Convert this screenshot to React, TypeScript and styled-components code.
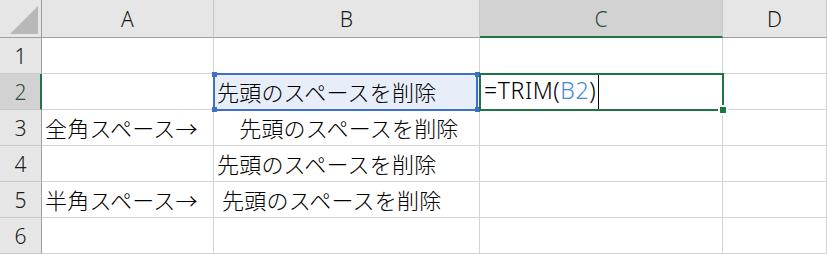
import React from "react";
import styled, { createGlobalStyle, css } from "styled-components";

const GRID = "#d4d4d4";
const HEADER_LINE = "#9f9f9f";
const GREEN = "#217346";
const BLUE = "#3d70c9";

const GlobalStyle = createGlobalStyle`
  html, body {
    margin: 0;
    padding: 0;
    background: #ffffff;
    overflow: hidden;
  }
`;

const columns = ["A", "B", "C", "D"];

type Row = { n: number; cells: string[] };

const rows: Row[] = [
  { n: 1, cells: ["", "", "", ""] },
  { n: 2, cells: ["", "先頭のスペースを削除", "", ""] },
  { n: 3, cells: ["全角スペース→", "　先頭のスペースを削除", "", ""] },
  { n: 4, cells: ["", "先頭のスペースを削除", "", ""] },
  { n: 5, cells: ["半角スペース→", " 先頭のスペースを削除", "", ""] },
  { n: 6, cells: ["", "", "", ""] },
];

const App = () => {
  return (
    <>
      <GlobalStyle />
      <Sheet>
        <Corner>
          <svg width="42" height="38" viewBox="0 0 42 38">
            <polygon points="10,34 38,34 38,6" fill="#b8b8b8" />
          </svg>
        </Corner>
        {columns.map((c) => (
          <ColHeader key={c} $selected={c === "C"}>
            {c}
          </ColHeader>
        ))}
        {rows.map((row) => (
          <React.Fragment key={row.n}>
            <RowHeader $selected={row.n === 2}>{row.n}</RowHeader>
            {row.cells.map((text, i) => {
              const ref = `${columns[i]}${row.n}`;
              if (ref === "B2") {
                return (
                  <Cell key={ref} $highlight>
                    <CellText>{text}</CellText>
                    <RangeBox>
                      <Handle $x="left" $y="top" />
                      <Handle $x="right" $y="top" />
                      <Handle $x="left" $y="bottom" />
                      <Handle $x="right" $y="bottom" />
                    </RangeBox>
                  </Cell>
                );
              }
              if (ref === "C2") {
                return (
                  <Cell key={ref}>
                    <Formula>
                      =TRIM(<RefText>B2</RefText>)
                    </Formula>
                    <Caret />
                    <ActiveBox>
                      <FillHandle />
                    </ActiveBox>
                  </Cell>
                );
              }
              return (
                <Cell key={ref}>
                  <CellText>{text}</CellText>
                </Cell>
              );
            })}
          </React.Fragment>
        ))}
      </Sheet>
    </>
  );
};

export default App;

const Sheet = styled.div`
  display: grid;
  grid-template-columns: 42px 172px 266px 243px 104px;
  grid-template-rows: 38px repeat(6, 36px);
  background: #ffffff;
  font-family: "Noto Sans", "Noto Sans CJK JP", sans-serif;
  color: #000000;
`;

const Corner = styled.div`
  background: #e6e6e6;
  border-right: 1px solid ${HEADER_LINE};
  border-bottom: 1px solid ${HEADER_LINE};
  box-sizing: border-box;
  overflow: hidden;

  svg {
    display: block;
  }
`;

const ColHeader = styled.div<{ $selected?: boolean }>`
  box-sizing: border-box;
  display: flex;
  align-items: center;
  justify-content: center;
  font-size: 21px;
  font-weight: 300;
  padding-top: 1px;
  background: #e6e6e6;
  border-right: 1px solid #c8c8c8;
  border-bottom: 1px solid ${HEADER_LINE};
  color: #1a1a1a;

  ${(p) =>
    p.$selected &&
    css`
      background: #d2d2d2;
      border-bottom: 2px solid ${GREEN};
      color: #28513a;
    `}
`;

const RowHeader = styled.div<{ $selected?: boolean }>`
  box-sizing: border-box;
  display: flex;
  align-items: center;
  justify-content: center;
  font-size: 21px;
  font-weight: 300;
  background: #e6e6e6;
  border-right: 1px solid ${HEADER_LINE};
  border-bottom: 1px solid #c8c8c8;
  color: #1a1a1a;

  ${(p) =>
    p.$selected &&
    css`
      background: #d2d2d2;
      border-right: 2px solid ${GREEN};
      padding-left: 1px;
      color: #28513a;
    `}
`;

const Cell = styled.div<{ $highlight?: boolean }>`
  position: relative;
  box-sizing: border-box;
  display: flex;
  align-items: center;
  padding-left: 3px;
  border-right: 1px solid ${GRID};
  border-bottom: 1px solid ${GRID};
  background: ${(p) => (p.$highlight ? "#e8eef9" : "#ffffff")};
`;

const CellText = styled.span`
  font-family: "Noto Sans CJK JP", sans-serif;
  font-size: 22px;
  font-weight: 300;
  letter-spacing: 0.2px;
  line-height: 1;
  white-space: pre;
  margin-top: -2px;
`;

const Formula = styled.span`
  font-family: "Noto Sans", "Noto Sans CJK JP", sans-serif;
  font-size: 23px;
  font-weight: 300;
  letter-spacing: 0.6px;
  line-height: 1;
  margin-top: -2px;
  margin-left: 1px;
  white-space: pre;
`;

const RefText = styled.span`
  color: #4a88d6;
`;

const Caret = styled.span`
  align-self: stretch;
  width: 1px;
  margin-left: 2px;
  background: #000000;
`;

const RangeBox = styled.div`
  position: absolute;
  z-index: 2;
  top: -1px;
  left: -1px;
  right: 1px;
  bottom: -2px;
  border: 2px solid ${BLUE};
  pointer-events: none;
`;

const Handle = styled.span<{ $x: "left" | "right"; $y: "top" | "bottom" }>`
  position: absolute;
  width: 5px;
  height: 5px;
  background: ${BLUE};
  ${(p) => (p.$x === "left" ? "left: -3px;" : "right: -4px;")}
  ${(p) => (p.$y === "top" ? "top: -3px;" : "bottom: -3px;")}
`;

const ActiveBox = styled.div`
  position: absolute;
  z-index: 3;
  top: -1px;
  left: -1px;
  right: -2px;
  bottom: -2px;
  border: 2px solid ${GREEN};
  pointer-events: none;
`;

const FillHandle = styled.span`
  position: absolute;
  right: -4px;
  bottom: -4px;
  width: 6px;
  height: 6px;
  background: ${GREEN};
  box-shadow: 0 0 0 2px #ffffff;
`;
